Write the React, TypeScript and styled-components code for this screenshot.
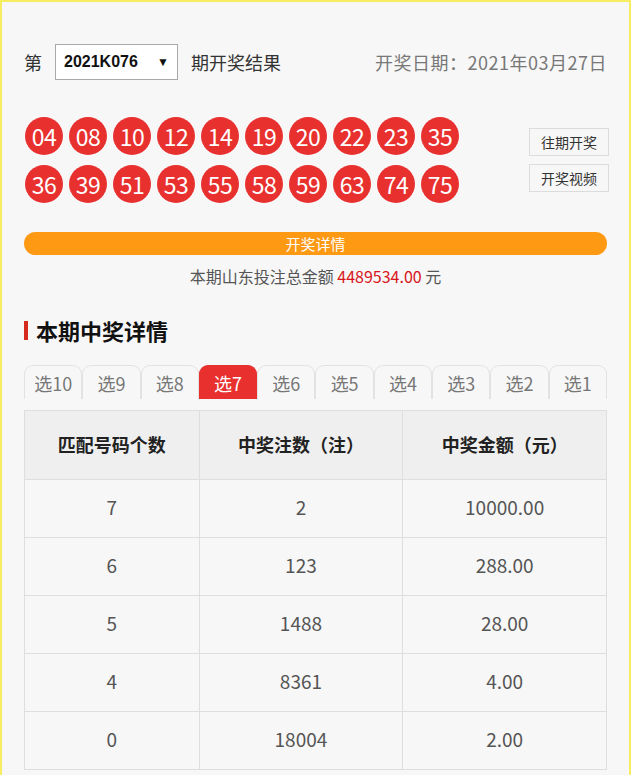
import React from "react";
import styled, { createGlobalStyle } from "styled-components";

const GlobalStyle = createGlobalStyle`
  html, body { margin: 0; padding: 0; background: #ffffff; }
  body { font-family: "Noto Sans CJK SC", "Noto Sans", sans-serif; }
  * { box-sizing: border-box; }
`;

const Frame = styled.div`
  width: 631px;
  min-height: 775px;
  border: 2px solid #f6ee60;
  border-bottom: none;
  background: #f7f7f7;
  padding: 42px 22px 0 22px;
`;

const Header = styled.div`
  display: flex;
  align-items: center;
  height: 36px;
`;

const Label = styled.span`
  font-size: 18px;
  color: #333;
  line-height: 1;
`;

const FakeSelect = styled.div`
  width: 123px;
  height: 36px;
  margin: 0 13px;
  border: 1px solid #a9a9a9;
  background: #fff;
  display: flex;
  align-items: center;
  justify-content: space-between;
  padding: 0 8px 0 8px;
  font-family: "Liberation Sans", Arial, sans-serif;
  font-weight: bold;
  font-size: 16px;
  color: #111;
`;

const Arrow = styled.span`
  font-size: 12px;
  color: #111;
`;

const DateText = styled.span`
  margin-left: auto;
  font-size: 18px;
  letter-spacing: 0.5px;
  color: #777;
  margin-right: 0;
`;

const BallArea = styled.div`
  display: flex;
  align-items: center;
  justify-content: space-between;
  margin-top: 37px;
`;

const BallRows = styled.div`
  display: flex;
  flex-direction: column;
  gap: 10px;
  padding-left: 1px;
`;

const BallRow = styled.div`
  display: flex;
  gap: 6px;
`;

const Ball = styled.div`
  width: 38px;
  height: 38px;
  border-radius: 50%;
  background: #e8302f;
  color: #fff;
  font-size: 23px;
  display: flex;
  align-items: center;
  justify-content: center;
  letter-spacing: -0.5px;
  line-height: 1;
`;

const SideButtons = styled.div`
  display: flex;
  flex-direction: column;
  gap: 8px;
  margin-right: -2px;
`;

const SideButton = styled.div`
  width: 80px;
  height: 28px;
  border: 1px solid #dcdcdc;
  background: #f7f7f7;
  color: #333;
  font-size: 14px;
  display: flex;
  align-items: center;
  justify-content: center;
`;

const DetailBar = styled.div`
  margin-top: 29px;
  height: 23px;
  border-radius: 12px;
  background: #fe9914;
  color: #fff;
  font-size: 15px;
  display: flex;
  align-items: center;
  justify-content: center;
`;

const TotalLine = styled.div`
  margin-top: 10px;
  text-align: center;
  font-size: 16px;
  color: #555;
  line-height: 22px;
`;

const Money = styled.span`
  color: #d8151b;
`;

const SectionTitle = styled.h2`
  margin: 28px 0 0 0;
  display: flex;
  align-items: center;
  gap: 8px;
  font-size: 22px;
  font-weight: bold;
  color: #111;
  line-height: 30px;
  &::before {
    content: "";
    width: 4px;
    height: 19px;
    background: #d52b1e;
  }
`;

const Tabs = styled.div`
  display: flex;
  margin-top: 20px;
`;

const Tab = styled.div<{ $active?: boolean }>`
  flex: 1;
  height: 34px;
  border: 1px solid ${(p) => (p.$active ? "#e8302f" : "#e2e2e2")};
  border-bottom: none;
  border-radius: 9px 9px 0 0;
  background: ${(p) => (p.$active ? "#e8302f" : "#f7f7f7")};
  color: ${(p) => (p.$active ? "#fff" : "#777")};
  font-size: 18px;
  display: flex;
  align-items: center;
  justify-content: center;
`;

const Table = styled.table`
  width: 100%;
  margin-top: 11px;
  border-collapse: collapse;
  table-layout: fixed;
`;

const Th = styled.th<{ $w: string }>`
  width: ${(p) => p.$w};
  height: 69px;
  padding: 0 0 3px 0;
  background: #efefef;
  border: 1px solid #dedede;
  font-size: 18px;
  font-weight: bold;
  color: #222;
  text-align: center;
`;

const Td = styled.td`
  height: 58px;
  padding: 0 0 4px 0;
  border: 1px solid #dedede;
  font-size: 19px;
  color: #555;
  text-align: center;
  background: #f7f7f7;
`;

const row1 = ["04", "08", "10", "12", "14", "19", "20", "22", "23", "35"];
const row2 = ["36", "39", "51", "53", "55", "58", "59", "63", "74", "75"];
const tabs = ["选10", "选9", "选8", "选7", "选6", "选5", "选4", "选3", "选2", "选1"];
const rows = [
  ["7", "2", "10000.00"],
  ["6", "123", "288.00"],
  ["5", "1488", "28.00"],
  ["4", "8361", "4.00"],
  ["0", "18004", "2.00"],
];

export default function App() {
  return (
    <>
      <GlobalStyle />
      <Frame>
        <Header>
          <Label>第</Label>
          <FakeSelect>
            <span>2021K076</span>
            <Arrow>▼</Arrow>
          </FakeSelect>
          <Label>期开奖结果</Label>
          <DateText>开奖日期：2021年03月27日</DateText>
        </Header>

        <BallArea>
          <BallRows>
            <BallRow>
              {row1.map((n) => (
                <Ball key={n}>{n}</Ball>
              ))}
            </BallRow>
            <BallRow>
              {row2.map((n) => (
                <Ball key={n}>{n}</Ball>
              ))}
            </BallRow>
          </BallRows>
          <SideButtons>
            <SideButton>往期开奖</SideButton>
            <SideButton>开奖视频</SideButton>
          </SideButtons>
        </BallArea>

        <DetailBar>开奖详情</DetailBar>
        <TotalLine>
          本期山东投注总金额 <Money>4489534.00</Money> 元
        </TotalLine>

        <SectionTitle>本期中奖详情</SectionTitle>

        <Tabs>
          {tabs.map((t) => (
            <Tab key={t} $active={t === "选7"}>
              {t}
            </Tab>
          ))}
        </Tabs>

        <Table>
          <thead>
            <tr>
              <Th $w="30%">匹配号码个数</Th>
              <Th $w="35%">中奖注数（注）</Th>
              <Th $w="35%">中奖金额（元）</Th>
            </tr>
          </thead>
          <tbody>
            {rows.map((r) => (
              <tr key={r[0]}>
                {r.map((c, i) => (
                  <Td key={i}>{c}</Td>
                ))}
              </tr>
            ))}
          </tbody>
        </Table>
      </Frame>
    </>
  );
}
